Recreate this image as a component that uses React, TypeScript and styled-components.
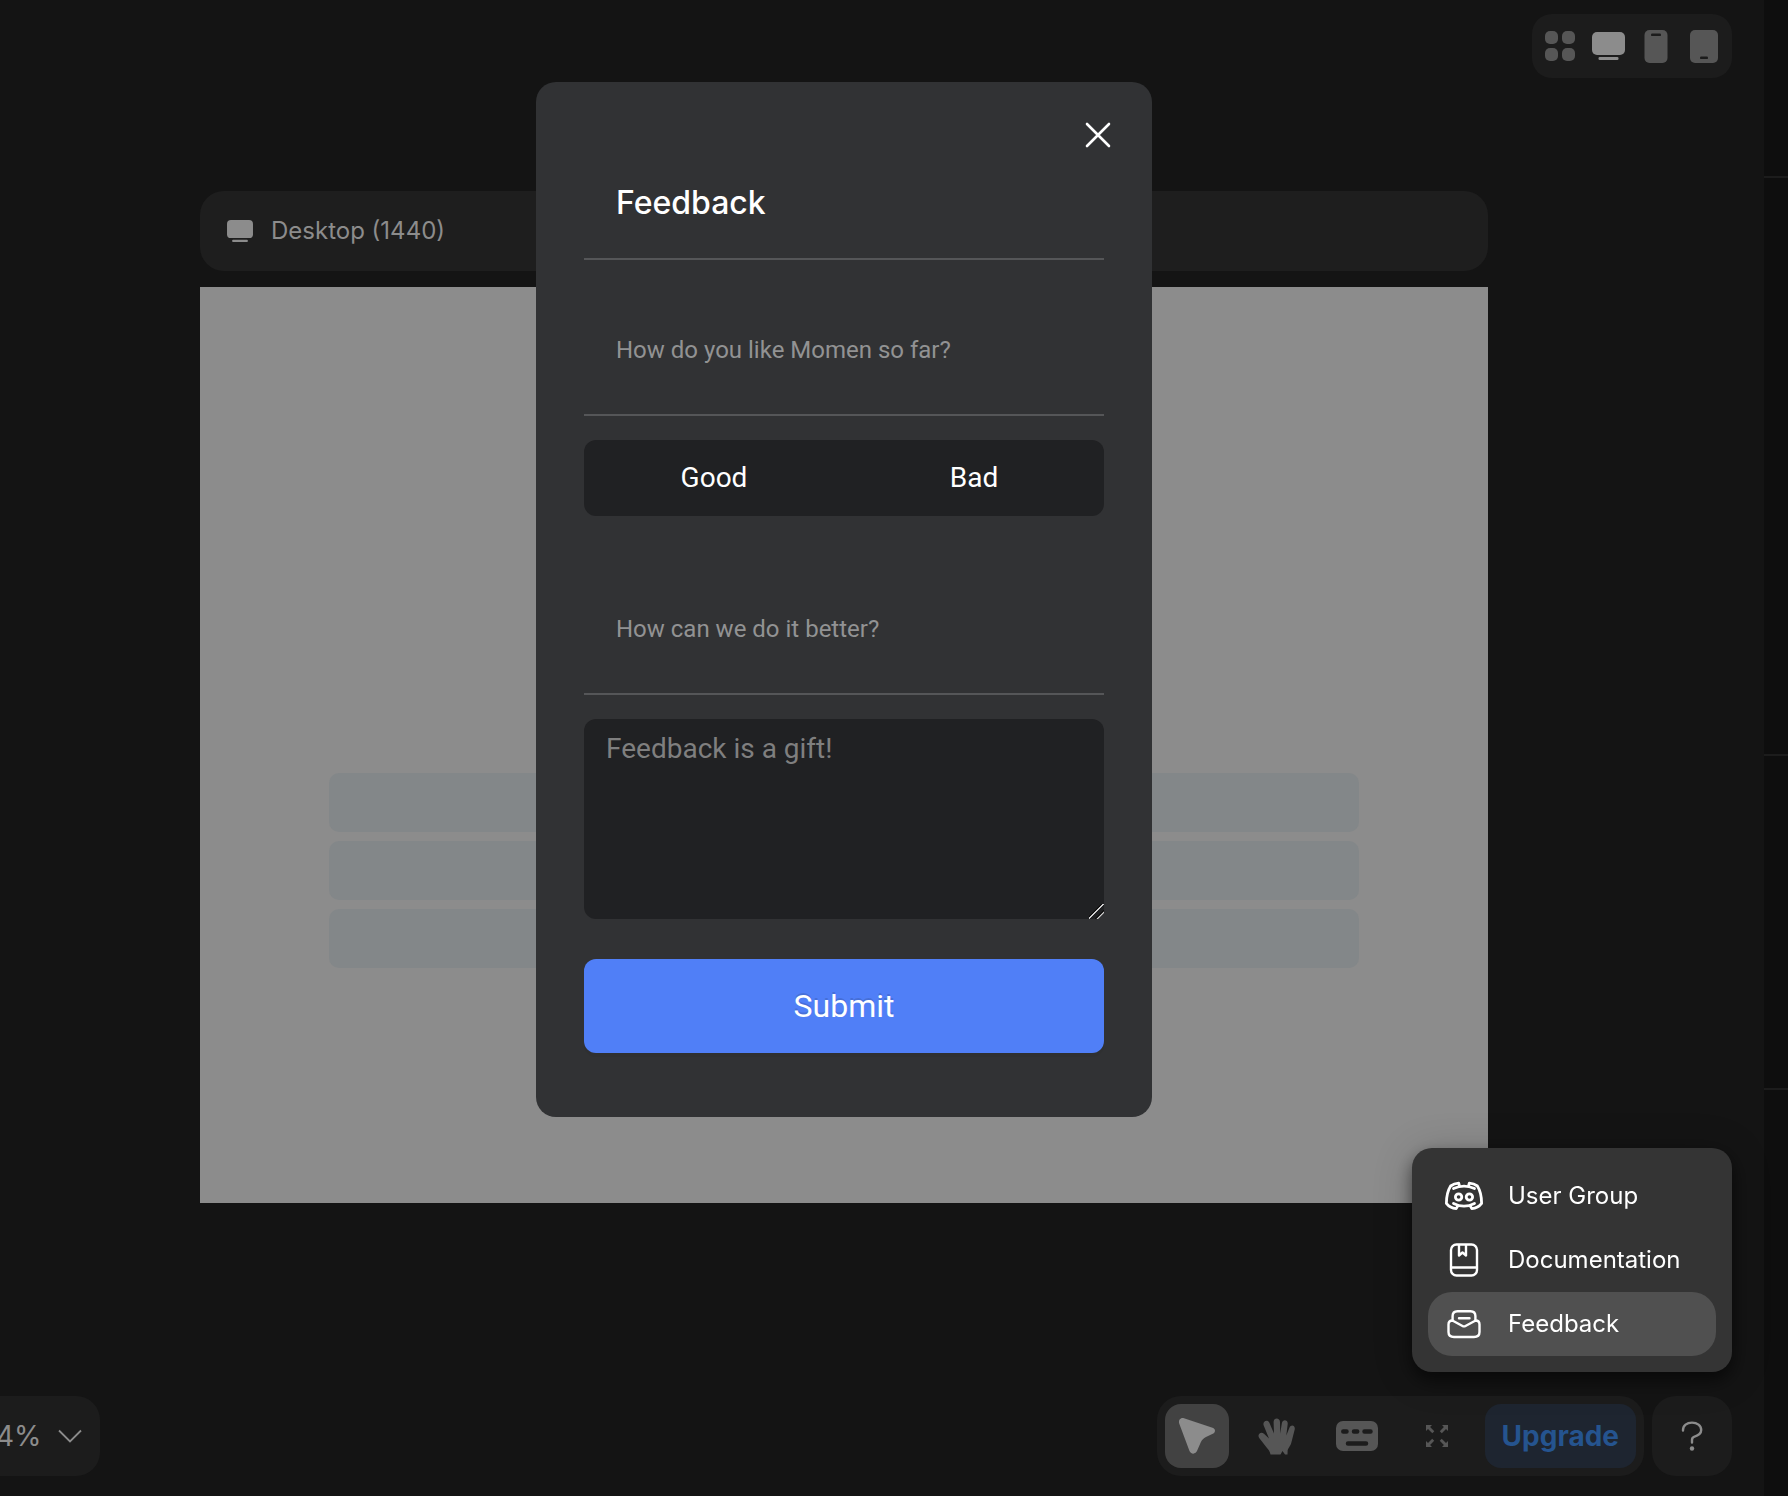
import React, { useState } from "react";
import styled, { createGlobalStyle } from "styled-components";

const GlobalStyle = createGlobalStyle`
  *, *::before, *::after { box-sizing: border-box; }
  body {
    margin: 0;
    background: #141414;
    font-family: Inter, "Liberation Sans", sans-serif;
    -webkit-font-smoothing: antialiased;
  }
  button, select, textarea { font-family: inherit; margin: 0; }
  svg { display: block; flex: none; }
`;

const Shell = styled.div`
  display: grid;
  grid-template-columns: minmax(0, 1fr) 24px;
  min-height: 100vh;
`;

const Workspace = styled.main`
  display: flex;
  flex-direction: column;
  min-width: 0;
  background: #141414;
`;

const SidePanel = styled.aside`
  display: flex;
  flex-direction: column;
  background: #0e0e0e;
`;

const PanelSection = styled.div<{ $height?: number }>`
  height: ${(p) => (p.$height ? `${p.$height}px` : "auto")};
  border-bottom: ${(p) => (p.$height ? "2px solid #1c1c1c" : "0")};
`;

const TopRow = styled.header`
  display: flex;
  justify-content: flex-end;
  padding: 14px 32px 0;
`;

const DeviceBar = styled.nav`
  display: flex;
  align-items: center;
  height: 64px;
  padding: 0 4px;
  border-radius: 20px;
  background: #1c1c1c;
`;

const DeviceButton = styled.button<{ $active?: boolean }>`
  display: grid;
  place-items: center;
  width: 48px;
  height: 48px;
  padding: 0;
  border: 0;
  background: none;
  color: ${(p) => (p.$active ? "#8c8c8c" : "#565656")};
`;

const Artboard = styled.section`
  display: flex;
  flex-direction: column;
  gap: 16px;
  margin: 113px 276px 0 200px;
`;

const ArtboardHeader = styled.div`
  display: flex;
  align-items: center;
  gap: 18px;
  height: 80px;
  padding: 0 27px;
  border-radius: 24px;
  background: #1e1e1e;
  color: #8c8c8c;
`;

const ArtboardTitle = styled.span`
  font-size: 24px;
  line-height: 32px;
`;

const Page = styled.div`
  display: flex;
  flex-direction: column;
  gap: 9px;
  height: 916px;
  padding: 486px 10% 0;
  background: #8c8c8c;
`;

const PageBlock = styled.div`
  height: 59px;
  border-radius: 10px;
  background: #838789;
`;

const BottomRow = styled.footer`
  display: flex;
  align-items: center;
  gap: 8px;
  margin-top: auto;
  padding: 0 32px 20px 0;
`;

const ZoomControl = styled.label`
  display: flex;
  align-items: center;
  justify-content: flex-end;
  gap: 16px;
  width: 100px;
  height: 80px;
  margin-right: auto;
  padding-right: 18px;
  border-radius: 0 24px 24px 0;
  background: #1c1c1c;
  color: #8c8c8c;
`;

const ZoomSelect = styled.select`
  appearance: none;
  padding: 0;
  border: 0;
  background: none;
  color: inherit;
  font-size: 28px;
  line-height: 36px;
`;

const ToolBar = styled.div`
  display: flex;
  align-items: center;
  gap: 16px;
  height: 80px;
  padding: 0 8px;
  border-radius: 24px;
  background: #1c1c1c;
`;

const ToolButton = styled.button<{ $active?: boolean }>`
  display: grid;
  place-items: center;
  width: 64px;
  height: 64px;
  padding: 0;
  border: 0;
  border-radius: 16px;
  background: ${(p) => (p.$active ? "#424242" : "none")};
  color: ${(p) => (p.$active ? "#8c8c8c" : "#565656")};
`;

const UpgradeButton = styled.button`
  height: 64px;
  padding: 0 17px;
  border: 0;
  border-radius: 16px;
  background: #1e2530;
  color: #25548f;
  font-size: 28px;
  line-height: 36px;
  font-weight: 700;
`;

const HelpAnchor = styled.div`
  position: relative;
`;

const HelpButton = styled.button`
  display: grid;
  place-items: center;
  width: 80px;
  height: 80px;
  padding: 0;
  border: 0;
  border-radius: 24px;
  background: #1c1c1c;
  color: #8c8c8c;
`;

const HelpMenu = styled.div`
  position: absolute;
  right: 0;
  bottom: 104px;
  z-index: 2;
  width: 320px;
  padding: 16px;
  border-radius: 20px;
  background: #343434;
  box-shadow: 0 8px 16px rgba(0, 0, 0, 0.5), 0 4px 40px rgba(0, 0, 0, 0.2);
`;

const MenuItem = styled.button<{ $active?: boolean }>`
  display: flex;
  align-items: center;
  gap: 24px;
  width: 100%;
  height: 64px;
  padding: 0 16px;
  border: 0;
  border-radius: 24px;
  background: ${(p) => (p.$active ? "#505050" : "none")};
  color: #ffffff;
  font-size: 24px;
  line-height: 32px;
  white-space: nowrap;
`;

const Overlay = styled.div`
  position: fixed;
  inset: 0 100px 0 0;
  z-index: 1;
  display: flex;
  justify-content: center;
  align-items: flex-start;
  padding-top: 82px;
  pointer-events: none;
`;

const Dialog = styled.form`
  display: flex;
  flex-direction: column;
  width: 616px;
  padding: 29px 48px 64px;
  border-radius: 20px;
  background: #313234;
  font-family: Roboto, sans-serif;
  pointer-events: auto;
`;

const CloseButton = styled.button`
  display: grid;
  place-items: center;
  align-self: flex-end;
  width: 48px;
  height: 48px;
  margin-right: -18px;
  padding: 0;
  border: 0;
  background: none;
  color: #ffffff;
`;

const DialogTitle = styled.h2`
  margin: 0;
  padding: 24px 32px 35px;
  border-bottom: 2px solid #555658;
  color: #ffffff;
  font-family: Inter, sans-serif;
  font-size: 32px;
  line-height: 40px;
  font-weight: 500;
`;

const Question = styled.label`
  padding: 74px 32px 48px;
  border-bottom: 2px solid #555658;
  color: #929293;
  font-size: 24px;
  line-height: 32px;
`;

const Choices = styled.div`
  display: grid;
  grid-template-columns: 1fr 1fr;
  height: 76px;
  margin: 24px 0 23px;
  border-radius: 12px;
  background: #202123;
`;

const Choice = styled.button`
  padding: 0;
  border: 0;
  background: none;
  color: #ffffff;
  font-size: 28px;
  line-height: 36px;
`;

const Message = styled.textarea`
  width: 100%;
  height: 200px;
  margin: 24px 0 40px;
  padding: 12px 22px;
  border: 0;
  border-radius: 12px;
  background: #202123;
  color: #ffffff;
  font-size: 28px;
  line-height: 36px;
  resize: both;
  outline: 0;

  &::placeholder { color: #7f7f7f; opacity: 1; }

  &::-webkit-resizer {
    background: linear-gradient(
      135deg,
      transparent 39%,
      #0c0c0c 41%,
      #0c0c0c 44%,
      #cfcfcf 46%,
      #cfcfcf 50%,
      transparent 52%,
      transparent 68%,
      #0c0c0c 70%,
      #0c0c0c 73%,
      #cfcfcf 75%,
      #cfcfcf 79%,
      transparent 81%
    );
  }
`;

const Submit = styled.button`
  height: 94px;
  border: 0;
  border-radius: 12px;
  background: #507ff7;
  color: #ffffff;
  font-size: 32px;
  line-height: 40px;
  text-shadow: 0 -2px 0 rgba(0, 0, 0, 0.12);
  box-shadow: 0 4px 0 rgba(0, 0, 0, 0.04);
`;

const GridIcon = () => (
  <svg width="30" height="30" viewBox="0 0 30 30" fill="currentColor">
    {[0, 17].map((y) => [0, 17].map((x) => (
      <rect key={`${x}-${y}`} x={x} y={y} width="13" height="13" rx="5" />
    )))}
  </svg>
);

const DesktopIcon = ({ size = 33 }: { size?: number }) => (
  <svg width={size} height={(size * 28) / 33} viewBox="0 0 33 28" fill="currentColor">
    <rect width="33" height="23" rx="5" />
    <rect x="6.5" y="25" width="20" height="3" rx="1.2" />
  </svg>
);

const PhoneIcon = () => (
  <svg width="24" height="33" viewBox="0 0 24 33" fill="currentColor">
    <rect x=".5" width="23" height="33" rx="5" />
    <rect x="7" y="3.5" width="10" height="2.6" rx="1.2" fill="#1c1c1c" />
  </svg>
);

const TabletIcon = () => (
  <svg width="28" height="33" viewBox="0 0 28 33" fill="currentColor">
    <rect width="28" height="33" rx="5" />
    <rect x="10" y="26.5" width="8" height="2.6" rx="1.2" fill="#1c1c1c" />
  </svg>
);

const ChevronIcon = () => (
  <svg width="24" height="14" viewBox="0 0 24 14" fill="none" stroke="currentColor" strokeWidth="1.8">
    <path d="M1 1.5 12 12.5 23 1.5" />
  </svg>
);

const PointerIcon = () => (
  <svg width="38" height="38" viewBox="0 0 38 38" fill="currentColor">
    <path d="M6 1.3 34.5 10.8C37.8 12 37.8 15.4 34.8 16.8L28 20C25.5 21.2 24 22.8 22.8 25.2L19.2 33.6C17.8 37.6 12.8 37.6 11.4 33.8L1.2 6.4C.2 3 2.8.3 6 1.3Z" />
  </svg>
);

const HandIcon = () => (
  <svg width="37" height="37" viewBox="0 0 37 37" fill="currentColor">
    <path d="M12.5 36.5C12 33.4 10.6 32 8.8 29.7L1.2 20C-1.2 16.5 2.8 12.8 6 15.7L11 20.4 5.7 7.5C4.1 3.5 9.3 .8 11.4 4.8L16 15.6 15.6 4C15.5-.8 22-.8 22 4L22.2 15.5 23.9 5C24.8 .8 30.2 1.8 29.7 6L28.300 17.500 31.400 9.800C33 6 37.600 7.500 36.700 11.500L33.500 24C32.600 28.500 29.600 30 29.600 33.500L29.500 36.500H27L24.500 33 22.500 36.500Z" />
  </svg>
);

const KeyboardIcon = () => (
  <svg width="42" height="30" viewBox="0 0 42 30" fill="currentColor">
    <rect width="42" height="30" rx="7" />
    <g stroke="#1c1c1c" strokeWidth="4.5" strokeLinecap="round">
      <path d="M7.300 10.500h3.200M18 10.500h3.200M28.500 10.500h6M12 22.500h18" />
    </g>
  </svg>
);

const ExpandIcon = () => (
  <svg width="22" height="22" viewBox="0 0 22 22" fill="currentColor">
    {[0, 90, 180, 270].map((angle) => (
      <path key={angle} transform={`rotate(${angle} 11 11)`} d="M0 0h6L4.100 2l4.200 4.200-2 2L2 4.100 0 6Z" />
    ))}
  </svg>
);

const QuestionIcon = () => (
  <svg width="22" height="30" viewBox="0 0 22 30" fill="none">
    <path d="M2 9.500V9C2 4.500 5.800 1.600 11 1.600S20.200 4.600 20.200 9 16.500 14.800 13 15.800C11.300 16.400 11 17.500 11 19v2.500" stroke="currentColor" strokeWidth="2.4" strokeLinecap="round" />
    <circle cx="11" cy="27.5" r="2.2" fill="currentColor" />
  </svg>
);

const CloseIcon = () => (
  <svg width="26" height="26" viewBox="0 0 26 26" stroke="currentColor" strokeWidth="2.6" strokeLinecap="round">
    <path d="M2 2 24 24M24 2 2 24" />
  </svg>
);

const DiscordIcon = () => (
  <svg width="40" height="32" viewBox="0 0 40 32" fill="none" stroke="currentColor" strokeWidth="2.8" strokeLinecap="round" strokeLinejoin="round">
    <path d="M9.500 8.500C16 5.500 24 5.500 30.500 8.500M9.500 23.500C16 26.800 24 26.800 30.500 23.500" />
    <path d="M15.500 6.200 14.700 3.200C11.500 3.400 8.500 4.600 6.600 6 3.800 10.500 2.400 16.500 2.400 23.300 4.800 26.500 8.600 28.300 12.200 28.600L14 25.600M24.500 6.200 25.300 3.200C28.500 3.400 31.500 4.600 33.400 6 36.200 10.500 37.600 16.500 37.600 23.300 35.200 26.500 31.400 28.300 27.800 28.600L26 25.600" />
    <circle cx="14.6" cy="17" r="3.2" />
    <circle cx="25.4" cy="17" r="3.2" />
  </svg>
);

const BookIcon = () => (
  <svg width="40" height="34" viewBox="0 0 40 34" fill="none" stroke="currentColor" strokeWidth="2.4" strokeLinejoin="round">
    <rect x="7" y="1.5" width="26" height="31" rx="5.5" />
    <path d="M7 24.500h26M15 2v10.500l3.500-3 3.500 3V2" />
  </svg>
);

const MailIcon = () => (
  <svg width="40" height="30" viewBox="0 0 40 30" fill="none" stroke="currentColor" strokeWidth="2.4" strokeLinecap="round" strokeLinejoin="round">
    <path d="M8.600 11.500V7C8.600 4 10.500 2.200 13.500 2.200h13c3 0 4.900 1.800 4.900 4.800v4.500M15 9.300h10.500" />
    <path d="M8.400 11.500 18.500 17Q20 17.800 21.500 17L31.600 11.500C34.500 11.500 35.500 13 35.500 15.500V23C35.500 26.500 33.500 28 30 28H10C6.500 28 4.500 26.500 4.500 23V15.500C4.500 13 5.500 11.500 8.400 11.500Z" />
  </svg>
);

export default function App() {
  const [message, setMessage] = useState("");
  return (
    <>
      <GlobalStyle />
      <Shell>
        <Workspace>
          <TopRow>
            <DeviceBar aria-label="Devices">
              <DeviceButton aria-label="All devices"><GridIcon /></DeviceButton>
              <DeviceButton aria-label="Desktop" $active><DesktopIcon /></DeviceButton>
              <DeviceButton aria-label="Phone"><PhoneIcon /></DeviceButton>
              <DeviceButton aria-label="Tablet"><TabletIcon /></DeviceButton>
            </DeviceBar>
          </TopRow>
          <Artboard>
            <ArtboardHeader>
              <DesktopIcon size={26} />
              <ArtboardTitle>Desktop (1440)</ArtboardTitle>
            </ArtboardHeader>
            <Page>
              <PageBlock />
              <PageBlock />
              <PageBlock />
            </Page>
          </Artboard>
          <BottomRow>
            <ZoomControl>
              <ZoomSelect aria-label="Zoom level">
                <option>4%</option>
              </ZoomSelect>
              <ChevronIcon />
            </ZoomControl>
            <ToolBar>
              <ToolButton aria-label="Select" $active><PointerIcon /></ToolButton>
              <ToolButton aria-label="Pan"><HandIcon /></ToolButton>
              <ToolButton aria-label="Keyboard shortcuts"><KeyboardIcon /></ToolButton>
              <ToolButton aria-label="Fit to screen"><ExpandIcon /></ToolButton>
              <UpgradeButton>Upgrade</UpgradeButton>
            </ToolBar>
            <HelpAnchor>
              <HelpButton aria-label="Help"><QuestionIcon /></HelpButton>
              <HelpMenu>
                <MenuItem><DiscordIcon />User Group</MenuItem>
                <MenuItem><BookIcon />Documentation</MenuItem>
                <MenuItem $active><MailIcon />Feedback</MenuItem>
              </HelpMenu>
            </HelpAnchor>
          </BottomRow>
        </Workspace>
        <SidePanel>
          <PanelSection $height={178} />
          <PanelSection $height={578} />
          <PanelSection $height={334} />
          <PanelSection />
        </SidePanel>
      </Shell>
      <Overlay>
        <Dialog role="dialog" aria-labelledby="feedback-title" onSubmit={(e) => e.preventDefault()}>
          <CloseButton type="button" aria-label="Close"><CloseIcon /></CloseButton>
          <DialogTitle id="feedback-title">Feedback</DialogTitle>
          <Question as="div" id="rating-label">How do you like Momen so far?</Question>
          <Choices role="group" aria-labelledby="rating-label">
            <Choice type="button">Good</Choice>
            <Choice type="button">Bad</Choice>
          </Choices>
          <Question htmlFor="message">How can we do it better?</Question>
          <Message
            id="message"
            placeholder="Feedback is a gift!"
            value={message}
            onChange={(e) => setMessage(e.target.value)}
          />
          <Submit type="submit">Submit</Submit>
        </Dialog>
      </Overlay>
    </>
  );
}
